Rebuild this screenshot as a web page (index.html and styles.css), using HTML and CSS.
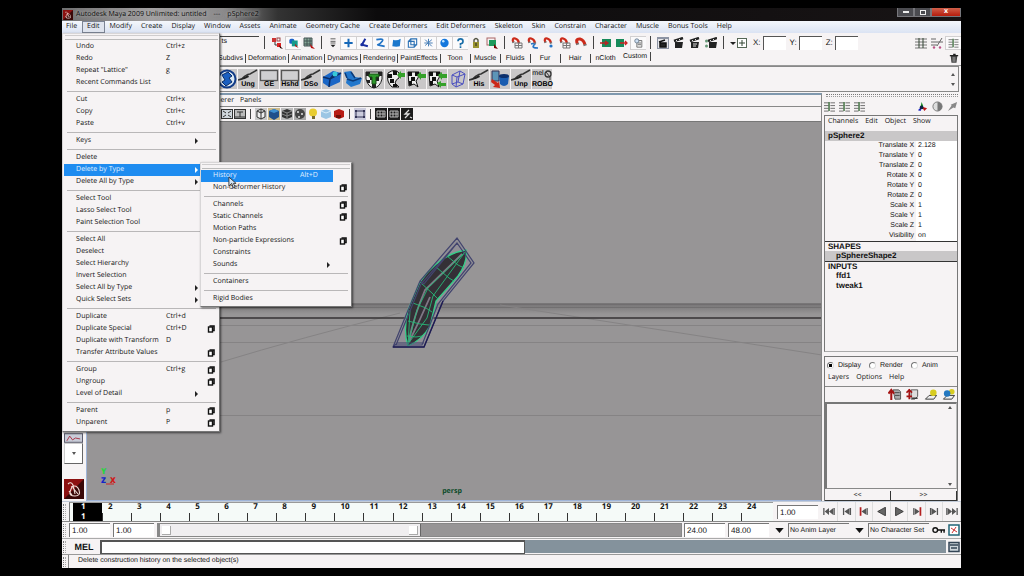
FILE: index.html
```html
<!DOCTYPE html>
<html lang="en">
<head>
<meta charset="utf-8">
<title>Autodesk Maya 2009 Unlimited: untitled --- pSphere2</title>
<link rel="stylesheet" href="styles.css">
</head>
<body>
<svg class="defs" aria-hidden="true">
  <symbol id="i-maya" viewBox="0 0 20 20"><rect width="20" height="20" fill="#8c1010"/><path d="M0 20L20 0V20Z" fill="#3a0808"/><path d="M4 5q3-3 5 1l2 9M7 8q6-3 8 3t-4 6-5-4 3-6M5 12l3 4M9 9l5 6" fill="none" stroke="#f0dcd6" stroke-width="1.1"/></symbol>
  <symbol id="i-hier" viewBox="0 0 12 12"><path d="M4 5v3h4" fill="none" stroke="#333"/><rect x="1" y="1" width="4" height="4" fill="#c33"/><rect x="6" y="1" width="3" height="3" fill="none" stroke="#944"/><rect x="6" y="6" width="4" height="4" fill="#d22"/><path d="M8 8l4 4-3-1z" fill="#200"/></symbol>
  <symbol id="i-obj" viewBox="0 0 12 12"><rect x="1" y="1" width="6" height="6" rx="2" fill="#1a62c8"/><rect x="4" y="3" width="7" height="7" fill="#159a8a"/><path d="M8 7l4 5-4-2z" fill="#b11"/></symbol>
  <symbol id="i-comp" viewBox="0 0 12 12"><path d="M1 1h8v8H1zM1 4h8M1 7h8M4 1v8M7 1v8" fill="#8a9" stroke="#455"/><path d="M7 7l5 5-4-1z" fill="#b11"/></symbol>
  <symbol id="i-list" viewBox="0 0 12 12"><path d="M3 1h6M3 4h6M3 6h6" stroke="#444"/><path d="M3 8h6l-3 3z" fill="#222"/></symbol>
  <symbol id="i-plus" viewBox="0 0 12 12"><path d="M6 1v10M1 6h10" stroke="#1668b8" stroke-width="2.4"/></symbol>
  <symbol id="i-joint" viewBox="0 0 12 12"><path d="M7 1L3 8l7 2" fill="none" stroke="#1a2fa0" stroke-width="2.4"/><circle cx="3" cy="8" r="2" fill="#1a2fa0"/></symbol>
  <symbol id="i-curve" viewBox="0 0 12 12"><path d="M1 2q10-2 7 2T3 8t8 2" fill="none" stroke="#2374c6" stroke-width="2"/></symbol>
  <symbol id="i-surf" viewBox="0 0 12 12"><path d="M2 2q4 2 9-1l-1 9q-4 1-9 0z" fill="#1c78cc"/></symbol>
  <symbol id="i-deform" viewBox="0 0 12 12"><path d="M4 1h7v7H4zM1 4h7v7H1zM1 4l3-3M8 11l3-3" fill="none" stroke="#2a70b4" stroke-width="1.3"/></symbol>
  <symbol id="i-dyn" viewBox="0 0 12 12"><path d="M6 1v9M2 2l8 8M10 2L2 9M1 6h10" stroke="#4a80b8" stroke-width="1.2"/></symbol>
  <symbol id="i-ball" viewBox="0 0 12 12"><circle cx="6" cy="6" r="5" fill="#1477dd"/><circle cx="4.500" cy="4" r="1.500" fill="#bfe4ff"/></symbol>
  <symbol id="i-help" viewBox="0 0 12 12"><path d="M3 4q0-3 3-3t3 3-3 3v2M6 10v2" fill="none" stroke="#1a6ea8" stroke-width="2"/></symbol>
  <symbol id="i-lock" viewBox="0 0 12 12"><path d="M4 5V3q2-3 4 0v2" fill="none" stroke="#554" stroke-width="1.4"/><rect x="3" y="5" width="6" height="6" fill="#9a9430"/><path d="M6 6v3" stroke="#222"/></symbol>
  <symbol id="i-hilite" viewBox="0 0 12 12"><rect x="1" y="1" width="8" height="7" fill="none" stroke="#a66"/><rect x="3" y="3" width="7" height="6" fill="#1d9a5c"/><path d="M8 7l4 5-4-1z" fill="#700"/></symbol>
  <symbol id="i-magnet" viewBox="0 0 12 12"><path d="M2.500 7Q0 1.500 5 2q4 1 5 6" fill="none" stroke="#cc2a1a" stroke-width="3"/><path d="M1 7.500l3-1M8.500 8.500l3-1" stroke="#777" stroke-width="1.500"/></symbol>
  <symbol id="i-snapgrid" viewBox="0 0 12 12"><path d="M4 6h7v5H4zM4 8.500h7M7.500 6v5" fill="none" stroke="#777"/><use href="#i-magnet" width="10" height="9"/></symbol>
  <symbol id="i-snapcurve" viewBox="0 0 12 12"><path d="M4 7q6-2 3 1t4 3" fill="none" stroke="#2374c6" stroke-width="1.600"/><use href="#i-magnet" width="10" height="9"/></symbol>
  <symbol id="i-snappt" viewBox="0 0 12 12"><circle cx="8" cy="9" r="1.600" fill="#2374c6"/><use href="#i-magnet" width="10" height="9"/></symbol>
  <symbol id="i-in" viewBox="0 0 12 12"><rect x="2" y="2" width="9" height="8" fill="#178a5a"/><path d="M0 6h8M5 4l3 2-3 2" stroke="#b22" fill="none" stroke-width="1.300"/></symbol>
  <symbol id="i-out" viewBox="0 0 12 12"><rect x="0" y="2" width="8" height="8" fill="#178a5a"/><path d="M4 6h7M9 4l2 2-2 2" stroke="#c22" fill="none" stroke-width="1.300"/></symbol>
  <symbol id="i-hist" viewBox="0 0 12 12"><path d="M4 3h6v8H4zM5 6h4M5 8h4" fill="#eee" stroke="#666"/><circle cx="4" cy="3.500" r="2.500" fill="#cfe0f4" stroke="#678"/></symbol>
  <symbol id="i-rview" viewBox="0 0 12 12"><rect x="0" y="0" width="12" height="12" fill="#8d94a4"/><rect x="1" y="2" width="10" height="9" fill="#e6e6ea"/><path d="M3 6h6v4H3zM2 5l6-2" stroke="#111" fill="#222" stroke-width="1.500"/></symbol>
  <symbol id="i-clap" viewBox="0 0 12 12"><path d="M2 5h8l-1 6H2z" fill="#222"/><path d="M1 4l9-3" stroke="#222" stroke-width="2.500"/><path d="M3 3l1 1M6 2l1 1" stroke="#ddd"/></symbol>
  <symbol id="i-clap2" viewBox="0 0 12 12"><use href="#i-clap"/><path d="M4 7h4M4 9h3" stroke="#ddd"/></symbol>
  <symbol id="i-clap3" viewBox="0 0 12 12"><circle cx="1.500" cy="4" r="1.500" fill="#697"/><circle cx="1.500" cy="9" r="1.500" fill="#697"/><use href="#i-clap" x="2"/></symbol>
  <symbol id="i-field" viewBox="0 0 18 12"><path d="M0 5h6L3 8z" fill="#222"/><rect x="7.500" y="1.500" width="9" height="9" fill="#fff" stroke="#565"/><path d="M12 3v6M9 6h6" stroke="#343"/></symbol>
  <symbol id="i-attr" viewBox="0 0 12 12"><path d="M0 2h12M0 5h12M0 8h12M0 11h12" stroke="#777"/><path d="M4 1v10M8 1v10" stroke="#343"/></symbol>
  <symbol id="i-attr2" viewBox="0 0 12 12"><path d="M0 2h5M0 5h12M0 8h6M6 9l5-8" stroke="#666"/><circle cx="3" cy="10.500" r="1.200" fill="#b58"/><circle cx="9" cy="10.500" r="1.200" fill="#b58"/></symbol>
  <symbol id="i-chan" viewBox="0 0 12 12"><path d="M0 2h5M0 5h5M0 8h5M0 11h5M7 2h5M7 5h5M7 8h5M7 11h5" stroke="#666"/><path d="M5.500 1v10" stroke="#363" stroke-width="1.500"/></symbol>
  <symbol id="i-trash" viewBox="0 0 12 12"><path d="M2 3h8l-1 8H3z" fill="#444"/><path d="M1 2.500h10M5 1h3" stroke="#222" stroke-width="1.500"/><path d="M5 4v6M7 4v6" stroke="#aaa"/></symbol>
  <symbol id="s-swirl" viewBox="0 0 20 20"><circle cx="10" cy="10" r="8.500" fill="#dbe8f4" stroke="#123c88" stroke-width="2"/><path d="M5 6l6-3 4 4-3 2 3 4-6 4-4-4 3-2z" fill="#1b5fc0" stroke="#0c2d66"/></symbol>
  <symbol id="s-brush" viewBox="0 0 20 20"><path d="M0 11q5-1 7-4 3-2 5-2l7-4" fill="none" stroke="#333" stroke-width="1.500"/><path d="M2 11q4-3 8-5l1 2q-5 3-9 3z" fill="#222"/></symbol>
  <symbol id="s-win" viewBox="0 0 20 20"><rect x="1.500" y="1.500" width="17" height="10" fill="#cfcfd1" stroke="#555" stroke-width="1.300"/></symbol>
  <symbol id="s-cube" viewBox="0 0 20 20"><path d="M1 8l10-6 8 2-1 9-11 5-6-4z" fill="#1a66c6"/><path d="M1 8l7 2 11-6M8 10l-1 8M8 10l4-5" fill="none" stroke="#0b2c66" stroke-width="1.500"/><circle cx="13" cy="5" r="2.500" fill="#35c8d8"/></symbol>
  <symbol id="s-box" viewBox="0 0 20 20"><path d="M1 3l7-1 4 6 7 1-2 6-9 3-5-4 1-5z" fill="#2277cc"/><path d="M4 10l6 2 8-3M8 3l4 6M4 9l-2-5" fill="none" stroke="#0b3a78" stroke-width="1.500"/></symbol>
  <symbol id="s-check" viewBox="0 0 20 20"><path d="M2 3h16v7q-2 8-8 9-6-1-8-9z" fill="#eee" stroke="#222"/><path d="M2 3h4v4H2zM14 3h4v4h-4zM6 7h3v4H6zM12 8h3v4h-3zM3 11h3v3H3zM8 15h4v4H8z" fill="#222"/></symbol>
  <symbol id="s-checkT" viewBox="0 0 20 20"><use href="#s-check"/><path d="M5 5h10v3h-3v7H8V8H5z" fill="#2e9a2c" stroke="#164d15"/></symbol>
  <symbol id="s-checkA" viewBox="0 0 20 20"><path d="M3 4q7-5 11 0v5q-3 1-4 5l4 4H7Q1 13 3 4z" fill="#eee" stroke="#111"/><path d="M3 5h4v4H3zM8 2h4v4H8zM5 10h4v4H5zM8 15h4v3H8z" fill="#111"/><path d="M12 6l4-4v2h4v4h-4v2z" fill="#35a12a"/></symbol>
  <symbol id="s-checkB" viewBox="0 0 20 20"><path d="M2 3h11l-1 6-2 3 2 6-4-3-5 2z" fill="#eee" stroke="#111"/><path d="M2 3h4v4H2zM9 3h4v4H9zM5 8h4v4H5zM3 12h3v4H3z" fill="#111"/><path d="M11 6l4-3v2h5v4h-5v2z" fill="#35a12a"/></symbol>
  <symbol id="s-checkC" viewBox="0 0 20 20"><use href="#s-checkB"/><path d="M10 14l4-2v2h5v3h-5v2z" fill="#35a12a"/></symbol>
  <symbol id="s-lattice" viewBox="0 0 20 20"><path d="M4 6l8-4 5 3-2 10-7 3-4-3zM4 6l5 2 8-3M9 8l-1 10M12 2l-2 11-6 2M10 13l5 2" fill="none" stroke="#4a4fc0"/></symbol>
  <symbol id="s-bin" viewBox="0 0 20 20"><path d="M2 2h7v10H2z" fill="#5c95b8" stroke="#335"/><path d="M9 7h10l-1 8q-4 4-8 0z" fill="#1a5cb0"/><ellipse cx="14" cy="7" rx="5" ry="2" fill="#0c2f6c"/><path d="M2 10l6 4 1-2 1 7-7-1 2-2-4-3z" fill="#cc2818"/></symbol>
  <symbol id="s-robo" viewBox="0 0 20 20"><circle cx="16" cy="5" r="3" fill="none" stroke="#333" stroke-width="1.300"/><path d="M14 3l4 5v3" stroke="#333" fill="none"/></symbol>
  <symbol id="p-view" viewBox="0 0 12 12"><rect x=".5" y="1.500" width="11" height="9" fill="#cfd6dc" stroke="#333"/><path d="M2 3l3 2M10 3L7 5M2 9l3-2M10 9L7 7" stroke="#333"/></symbol>
  <symbol id="p-gate" viewBox="0 0 12 12"><rect x=".5" y="1.500" width="11" height="9" fill="#bbb" stroke="#333"/><path d="M3 4h6M6 4v5M1 9h10" stroke="#333"/></symbol>
  <symbol id="p-wire" viewBox="0 0 12 12"><rect width="12" height="12" fill="#c8c8c8"/><path d="M2 3l4-2 4 2v6l-4 2-4-2zM2 3l4 2 4-2M6 1v10" fill="#eee" stroke="#333"/></symbol>
  <symbol id="p-shade" viewBox="0 0 12 12"><rect width="12" height="12" fill="#cbb98a"/><path d="M1 3l5-2 5 2v6l-5 3-5-3z" fill="#1f4f8a"/><path d="M1 3l5 2 5-2-5-2z" fill="#3d8fd0"/></symbol>
  <symbol id="p-tex" viewBox="0 0 12 12"><rect width="12" height="12" fill="#bbb"/><path d="M1 3l5-2 5 2v6l-5 2-5-2z" fill="#333"/><path d="M1 6l5 2 5-2M6 5v6M1 3l5 2 5-2" fill="none" stroke="#888"/></symbol>
  <symbol id="p-check" viewBox="0 0 12 12"><rect width="12" height="12" fill="#aaa"/><circle cx="6" cy="6" r="5" fill="#444"/><path d="M3 3h2v2H3zM7 5h2v2H7zM4 8h2v2H4z" fill="#bbb"/></symbol>
  <symbol id="p-bulb" viewBox="0 0 12 12"><circle cx="6" cy="4.500" r="4" fill="#e8cc30"/><path d="M5 8h3v3H5z" fill="#776a30"/></symbol>
  <symbol id="p-ice" viewBox="0 0 12 12"><path d="M1 3l5-2 5 2v6l-5 2-5-2z" fill="#9cc6e4"/><path d="M1 3l5 2 5-2" fill="none" stroke="#d8ecf8"/></symbol>
  <symbol id="p-red" viewBox="0 0 12 12"><path d="M1 3l5-2 5 2v6l-5 2-5-2z" fill="#b81c14"/><path d="M3 7h5v3H3z" fill="#701008"/></symbol>
  <symbol id="p-iso" viewBox="0 0 12 12"><rect width="12" height="12" fill="#ccd"/><path d="M2 3h8v6H2z" fill="none" stroke="#335"/><path d="M1 2h2v2H1zM9 2h2v2H9zM1 8h2v2H1zM9 8h2v2H9z" fill="#335"/></symbol>
  <symbol id="p-dark" viewBox="0 0 12 12"><rect width="12" height="12" fill="#1c1c1c"/><path d="M2 3h8v6H2zM2 6h8M5 3v6M8 3v6" fill="none" stroke="#b8b8b8"/></symbol>
  <symbol id="p-dark2" viewBox="0 0 12 12"><rect width="12" height="12" fill="#1c1c1c"/><path d="M8 2L4 6h4l-4 4M9 9l2 1" fill="none" stroke="#ddd" stroke-width="1.300"/></symbol>
  <symbol id="r-axis" viewBox="0 0 12 12"><path d="M5 1l2 5H4z" fill="#118a22"/><path d="M5 6l6 2-3 3z" fill="#c01818"/><path d="M5 6L1 10l3 1z" fill="#1520c0"/><circle cx="5" cy="7" r="2" fill="#124"/></symbol>
  <symbol id="r-half" viewBox="0 0 12 12"><circle cx="6" cy="6" r="5" fill="#ddd" stroke="#777"/><path d="M6 1a5 5 0 010 10z" fill="#777"/></symbol>
  <symbol id="r-arrow" viewBox="0 0 12 12"><path d="M1 11l4-6-1-1 7-3-2 7-2-1z" fill="#888"/></symbol>
  <symbol id="l-up" viewBox="0 0 14 14"><path d="M5 2h6l2 2v8H7z" fill="#aaa" stroke="#555"/><path d="M7 5h5M7 8h5" stroke="#444"/><path d="M3 13V3M0 6l3-4 3 4" stroke="#a51414" stroke-width="2.200" fill="none"/></symbol>
  <symbol id="l-down" viewBox="0 0 14 14"><path d="M5 2h7v7l-3 3H5z" fill="#ddd" stroke="#555"/><path d="M6 11h6" stroke="#333" stroke-width="1.500"/><path d="M3 1v11M0 5l3-3 3 3M0 9h6" stroke="#a51414" stroke-width="1.800" fill="none"/></symbol>
  <symbol id="l-new" viewBox="0 0 14 14"><path d="M1 12l4-4h8l-3 4z" fill="#eee" stroke="#333"/><circle cx="9.500" cy="5" r="3.500" fill="#d8cc20"/></symbol>
  <symbol id="l-newsel" viewBox="0 0 14 14"><path d="M1 12l4-4h8l-3 4z" fill="#eee" stroke="#333"/><circle cx="10" cy="4" r="3" fill="#d8cc20"/><circle cx="5" cy="6" r="3.500" fill="#2478c0"/></symbol>
  <symbol id="t-start" viewBox="0 0 14 10"><path d="M1 1v8M13 1v8" stroke="#555" stroke-width="1.500"/><path d="M7 1v8L2 5zM12 1v8L7 5z" fill="#555"/></symbol>
  <symbol id="t-back" viewBox="0 0 14 10"><path d="M3 1v8M11 1v8" stroke="#555" stroke-width="1.500"/><path d="M10 1v8L4 5z" fill="#555"/></symbol>
  <symbol id="t-keyb" viewBox="0 0 14 10"><path d="M3 0v10" stroke="#b42020" stroke-width="2"/><path d="M10 1v8L4 5z" fill="#555"/><path d="M11 1v8" stroke="#555"/></symbol>
  <symbol id="t-rev" viewBox="0 0 14 10"><path d="M11 0v10L2 5z" fill="#666" stroke="#333"/></symbol>
  <symbol id="t-menu" viewBox="0 0 10 6"><path d="M0 0h10L5 6z" fill="#111"/></symbol>
  <symbol id="t-key" viewBox="0 0 14 10"><circle cx="3.500" cy="5" r="2.500" fill="none" stroke="#111" stroke-width="1.500"/><path d="M6 5h8M10 5v3M13 5v3" stroke="#111" stroke-width="1.500" fill="none"/></symbol>
  <symbol id="t-auto" viewBox="0 0 12 12"><rect x="1" y="1" width="10" height="10" fill="#fff" stroke="#267" stroke-width="1.500"/><path d="M3 4l6 4M8 3L4 9" stroke="#c33"/></symbol>
  <symbol id="t-script" viewBox="0 0 12 12"><rect x="1" y="1.500" width="10" height="9" fill="#ccd4da" stroke="#345" stroke-width="1.500"/><path d="M2 4h8M3 7h6" stroke="#345" stroke-width="1.500"/></symbol>
  <symbol id="m-opt" viewBox="0 0 8 8"><path d="M2.500 1h4.500v4.500h-1.500" fill="none" stroke="#111" stroke-width="1.600"/><rect x="1.500" y="2" width="4" height="5" fill="#fff" stroke="#111" stroke-width="1.400"/></symbol>
</svg>

<main class="app">
  <header class="titlebar">
    <svg class="logo"><use href="#i-maya"/></svg>
    <h1 class="caption"><span>Autodesk Maya 2009 Unlimited: untitled</span><span>---</span><span>pSphere2</span></h1>
    <div class="winbtns"><button class="wb" aria-label="Minimize"><i class="g-min"></i></button><button class="wb" aria-label="Restore"><i class="g-max"></i></button><button class="wb close" aria-label="Close">x</button></div>
  </header>

  <nav class="menubar">
    <button>File</button><div class="menuhost"><button class="open">Edit</button>
      <div class="menu editmenu">
        <button>Undo<kbd>Ctrl+z</kbd></button>
        <button>Redo<kbd>Z</kbd></button>
        <button>Repeat "Lattice"<kbd>g</kbd></button>
        <button>Recent Commands List</button>
        <hr>
        <button>Cut<kbd>Ctrl+x</kbd></button>
        <button>Copy<kbd>Ctrl+c</kbd></button>
        <button>Paste<kbd>Ctrl+v</kbd></button>
        <hr>
        <button class="sub">Keys</button>
        <hr>
        <button>Delete</button>
        <div class="menuhost">
          <button class="sub on">Delete by Type</button>
          <div class="menu submenu">
            <button class="on">History<kbd>Alt+D</kbd></button>
            <button>Non-deformer History<svg><use href="#m-opt"/></svg></button>
            <hr>
            <button>Channels<svg><use href="#m-opt"/></svg></button>
            <button>Static Channels<svg><use href="#m-opt"/></svg></button>
            <button>Motion Paths</button>
            <button>Non-particle Expressions<svg><use href="#m-opt"/></svg></button>
            <button>Constraints</button>
            <button class="sub">Sounds</button>
            <hr>
            <button>Containers</button>
            <hr>
            <button>Rigid Bodies</button>
            <svg class="cursor" viewBox="0 0 10 14"><path d="M1 1v10l3-3 2 5 2-1-2-4h3z" fill="#cfe2f4" stroke="#333"/></svg>
          </div>
        </div>
        <button class="sub">Delete All by Type</button>
        <hr>
        <button>Select Tool</button>
        <button>Lasso Select Tool</button>
        <button>Paint Selection Tool</button>
        <hr>
        <button>Select All</button>
        <button>Deselect</button>
        <button>Select Hierarchy</button>
        <button>Invert Selection</button>
        <button class="sub">Select All by Type</button>
        <button class="sub">Quick Select Sets</button>
        <hr>
        <button>Duplicate<kbd>Ctrl+d</kbd></button>
        <button>Duplicate Special<kbd>Ctrl+D</kbd><svg><use href="#m-opt"/></svg></button>
        <button>Duplicate with Transform<kbd>D</kbd></button>
        <button>Transfer Attribute Values<svg><use href="#m-opt"/></svg></button>
        <hr>
        <button>Group<kbd>Ctrl+g</kbd><svg><use href="#m-opt"/></svg></button>
        <button>Ungroup<svg><use href="#m-opt"/></svg></button>
        <button class="sub">Level of Detail</button>
        <hr>
        <button>Parent<kbd>p</kbd><svg><use href="#m-opt"/></svg></button>
        <button>Unparent<kbd>P</kbd><svg><use href="#m-opt"/></svg></button>
      </div>
    </div><button>Modify</button><button>Create</button><button>Display</button><button>Window</button><button>Assets</button><button>Animate</button><button>Geometry Cache</button><button>Create Deformers</button><button>Edit Deformers</button><button>Skeleton</button><button>Skin</button><button>Constrain</button><button>Character</button><button>Muscle</button><button>Bonus Tools</button><button>Help</button>
  </nav>

  <section class="status">
    <div class="mask">ts</div>
    <div class="icons">
      <i class="grip"></i>
      <svg><use href="#i-hier"/></svg><svg class="lit"><use href="#i-obj"/></svg><svg><use href="#i-comp"/></svg>
      <i class="grip"></i>
      <svg class="slim"><use href="#i-list"/></svg><svg class="lit"><use href="#i-plus"/></svg><svg class="lit"><use href="#i-joint"/></svg><svg class="lit"><use href="#i-curve"/></svg><svg class="lit"><use href="#i-surf"/></svg><svg class="lit"><use href="#i-deform"/></svg><svg class="lit"><use href="#i-dyn"/></svg><svg class="lit"><use href="#i-ball"/></svg><svg class="lit"><use href="#i-help"/></svg><svg><use href="#i-lock"/></svg><svg><use href="#i-hilite"/></svg>
      <i class="grip"></i>
      <svg><use href="#i-snapgrid"/></svg><svg><use href="#i-snapcurve"/></svg><svg><use href="#i-snappt"/></svg><svg><use href="#i-snapgrid"/></svg><svg><use href="#i-magnet"/></svg>
      <i class="grip"></i>
      <svg><use href="#i-in"/></svg><svg><use href="#i-out"/></svg><svg class="lit"><use href="#i-hist"/></svg>
      <i class="grip"></i>
      <svg><use href="#i-rview"/></svg><svg><use href="#i-clap"/></svg><svg><use href="#i-clap2"/></svg><svg><use href="#i-clap3"/></svg>
      <i class="grip"></i>
      <svg class="wide"><use href="#i-field"/></svg>
    </div>
    <label class="coord">X:<input type="text"></label><label class="coord">Y:<input type="text"></label><label class="coord">Z:<input type="text"></label>
    <div class="icons end"><svg><use href="#i-attr"/></svg><svg><use href="#i-attr2"/></svg><svg class="lit"><use href="#i-chan"/></svg></div>
  </section>

  <section class="shelftabs">
    <button>Subdivs</button><button>Deformation</button><button>Animation</button><button>Dynamics</button><button>Rendering</button><button>PaintEffects</button><button>Toon</button><button>Muscle</button><button>Fluids</button><button>Fur</button><button>Hair</button><button class="last">nCloth</button><button class="cur">Custom</button>
    <svg class="trash"><use href="#i-trash"/></svg>
  </section>

  <section class="shelf">
    <div class="tile"><svg><use href="#s-swirl"/></svg></div>
    <div class="tile"><svg><use href="#s-brush"/></svg><b>Ung</b></div>
    <div class="tile"><svg><use href="#s-win"/></svg><b>GE</b></div>
    <div class="tile"><svg><use href="#s-win"/></svg><b>Hshd</b></div>
    <div class="tile"><svg><use href="#s-brush"/></svg><b>DSo</b></div>
    <div class="tile"><svg><use href="#s-cube"/></svg></div>
    <div class="tile"><svg><use href="#s-box"/></svg></div>
    <div class="tile"><svg><use href="#s-checkT"/></svg></div>
    <div class="tile"><svg><use href="#s-checkA"/></svg></div>
    <div class="tile"><svg><use href="#s-checkB"/></svg></div>
    <div class="tile"><svg><use href="#s-checkC"/></svg></div>
    <div class="tile"><svg><use href="#s-lattice"/></svg></div>
    <div class="tile"><svg><use href="#s-brush"/></svg><b>His</b></div>
    <div class="tile"><svg><use href="#s-bin"/></svg></div>
    <div class="tile"><svg><use href="#s-brush"/></svg><b>Unp</b></div>
    <div class="tile two"><svg><use href="#s-robo"/></svg><b>mel</b><b>ROBO</b></div>
    <div class="updown"><i class="up"></i><i class="down"></i></div>
  </section>

  <div class="work">
    <aside class="toolbox">
      <div class="layout"><svg viewBox="0 0 20 10"><rect x=".5" y=".5" width="19" height="9" fill="#c8ccd8" stroke="#556"/><path d="M3 8l3-5 3 4 3-2 5 1" fill="none" stroke="#a34"/></svg></div>
      <button class="more" aria-label="More"><i class="down"></i></button>
      <svg class="mayalogo"><use href="#i-maya"/></svg>
    </aside>
    <section class="panel">
      <div class="panelmenu"><button>Renderer</button><button>Panels</button></div>
      <div class="paneltools">
        <svg><use href="#p-view"/></svg><svg><use href="#p-gate"/></svg><i class="grip"></i><svg><use href="#p-wire"/></svg><svg><use href="#p-shade"/></svg><svg><use href="#p-tex"/></svg><svg><use href="#p-check"/></svg><svg><use href="#p-bulb"/></svg><svg><use href="#p-ice"/></svg><svg><use href="#p-red"/></svg><i class="grip"></i><svg><use href="#p-iso"/></svg><i class="grip"></i><svg><use href="#p-dark"/></svg><svg><use href="#p-dark"/></svg><svg><use href="#p-dark2"/></svg>
      </div>
      <div class="viewport">
        <svg class="scene" viewBox="86 122 736 378" preserveAspectRatio="xMidYMid slice">
          <defs><linearGradient id="hz" x1="0" y1="0" x2="0" y2="1"><stop offset="0" stop-color="#777576"/><stop offset=".35" stop-color="#7f7d7e"/><stop offset="1" stop-color="#979596"/></linearGradient></defs>
          <rect x="86" y="303" width="736" height="11" fill="url(#hz)"/>
          <path d="M86 304.500H822M86 307.500H822" stroke="#6d6b6c" stroke-width=".8"/>
          <path d="M86 325.500H822M86 342.500H822M86 415.500H822" stroke="#858384"/>
          <path d="M221 362Q300 338 400 313M500 305L822 355" stroke="#858384" fill="none"/>
          <path d="M86 318H822" stroke="#343233" stroke-width="1.700"/>
          <path d="M393 347L408 307 418 283 421 280 457 238 474 263 442 302 437 310 424 347z" fill="#8b8a96" opacity=".5"/>
          <path d="M408 346Q403 332 408 310L420 282Q440 254 466 250 468 262 458 276L436 301 430 326Q422 340 408 346z" fill="#343036"/>
          <path d="M409 340Q414 316 425 290L462 254M409 342Q420 320 430 297" fill="none" stroke="#807886" stroke-width="1.800"/>
          <path d="M408 346Q403 332 408 310L420 282Q440 254 466 250 468 262 458 276L436 301 430 326Q422 340 408 346z" fill="none" stroke="#35cf8a" stroke-width="1.300"/>
          <path d="M408 344L417 310 428 288 465 252M408 344L427 318 433 296 465 252M408 346L410 310M420 282L433 294 438 299M436 267L449 278 454 281M447 256L458 265 464 268M413 303L426 308 432 312M408 321L420 324 429 325M407 336L416 337 422 336" fill="none" stroke="#28b878" stroke-width=".9"/>
          <path d="M393 347L420 281 457 238 474 263 443 301 424 347zM396 345L421 284 457 243 471 263 438 304 422 345zM393 347L397 343H424M420 281L424 284 457 243" fill="none" stroke="#42446e" stroke-width="1.200"/>
          <path d="M443 301L424 347H393" fill="none" stroke="#1d1b52" stroke-width="1.400"/>
          <path d="M106 484h8" stroke="#c22"/>
        </svg>
        <span class="axes"><b class="ay">Y</b><b class="az">Z</b><b class="ax">X</b></span>
        <span class="camera">persp</span>
      </div>
    </section>

    <aside class="side">
      <div class="dots"></div>
      <div class="sidetools"><svg><use href="#i-chan"/></svg><svg><use href="#i-chan"/></svg><svg class="lit"><use href="#i-chan"/></svg><svg class="push"><use href="#r-axis"/></svg><svg><use href="#r-half"/></svg><svg><use href="#r-arrow"/></svg></div>
      <section class="channels">
        <div class="submenubar"><button>Channels</button><button>Edit</button><button>Object</button><button>Show</button></div>
        <h2 class="node">pSphere2</h2>
        <table>
          <tr><th scope="row">Translate X</th><td>2.128</td></tr>
          <tr><th scope="row">Translate Y</th><td>0</td></tr>
          <tr><th scope="row">Translate Z</th><td>0</td></tr>
          <tr><th scope="row">Rotate X</th><td>0</td></tr>
          <tr><th scope="row">Rotate Y</th><td>0</td></tr>
          <tr><th scope="row">Rotate Z</th><td>0</td></tr>
          <tr><th scope="row">Scale X</th><td>1</td></tr>
          <tr><th scope="row">Scale Y</th><td>1</td></tr>
          <tr><th scope="row">Scale Z</th><td>1</td></tr>
          <tr><th scope="row">Visibility</th><td>on</td></tr>
        </table>
        <h3>SHAPES</h3>
        <p class="shape">pSphereShape2</p>
        <h3>INPUTS</h3>
        <p>ffd1</p>
        <p>tweak1</p>
      </section>
      <section class="layers">
        <div class="radios"><label><input type="radio" name="layer" checked>Display</label><label><input type="radio" name="layer">Render</label><label><input type="radio" name="layer">Anim</label></div>
        <div class="submenubar"><button>Layers</button><button>Options</button><button>Help</button></div>
        <div class="layertools"><svg><use href="#l-up"/></svg><svg><use href="#l-down"/></svg><svg><use href="#l-new"/></svg><svg><use href="#l-newsel"/></svg></div>
        <div class="layerlist"><div class="updown"><i class="up"></i><i class="down"></i></div></div>
        <div class="pager"><button>&lt;&lt;</button><button>&gt;&gt;</button></div>
      </section>
    </aside>
  </div>

  <section class="timeline">
    <i class="vgrip"></i>
    <ol class="frames"><li class="now"><span>1</span><span>1</span></li><li>2</li><li>3</li><li>4</li><li>5</li><li>6</li><li>7</li><li>8</li><li>9</li><li>10</li><li>11</li><li>12</li><li>13</li><li>14</li><li>15</li><li>16</li><li>17</li><li>18</li><li>19</li><li>20</li><li>21</li><li>22</li><li>23</li><li>24</li></ol>
    <input class="num" type="text" value="1.00" aria-label="Current frame">
    <div class="play">
      <button aria-label="Go to start"><svg><use href="#t-start"/></svg></button><button aria-label="Step back"><svg><use href="#t-back"/></svg></button><button aria-label="Previous key"><svg><use href="#t-keyb"/></svg></button><button aria-label="Play backwards"><svg><use href="#t-rev"/></svg></button><button class="flip" aria-label="Play forwards"><svg><use href="#t-rev"/></svg></button><button class="flip" aria-label="Next key"><svg><use href="#t-keyb"/></svg></button><button class="flip" aria-label="Step forward"><svg><use href="#t-back"/></svg></button><button class="flip" aria-label="Go to end"><svg><use href="#t-start"/></svg></button>
    </div>
  </section>

  <section class="range">
    <i class="vgrip"></i>
    <input class="num" type="text" value="1.00" aria-label="Animation start"><input class="num" type="text" value="1.00" aria-label="Range start">
    <div class="track"><div class="thumb"><i></i><i></i></div></div>
    <input class="num" type="text" value="24.00" aria-label="Range end"><input class="num" type="text" value="48.00" aria-label="Animation end">
    <svg class="arrow"><use href="#t-menu"/></svg><select aria-label="Animation layer"><option>No Anim Layer</option></select>
    <svg class="arrow"><use href="#t-menu"/></svg><select aria-label="Character set"><option>No Character Set</option></select>
    <svg class="key"><use href="#t-key"/></svg><svg class="sq"><use href="#t-auto"/></svg>
  </section>

  <section class="command">
    <i class="vgrip"></i>
    <label for="mel">MEL</label><input id="mel" type="text"><output></output><svg class="sq"><use href="#t-script"/></svg>
  </section>

  <footer class="helpline"><i class="vgrip"></i><p>Delete construction history on the selected object(s)</p></footer>
</main>
</body>
</html>
```
FILE: styles.css
```css
* { box-sizing: border-box; text-rendering: geometricPrecision; }

body {
  margin: 0;
  padding: 8px 63px 8px 62px;
  height: 100vh;
  background: #000;
  color: #111;
  font: 7px/10px "Open Sans", "Noto Sans", sans-serif;
}

button, input, select { font: inherit; color: inherit; margin: 0; border: 0; padding: 0; background: none; border-radius: 0; }
h1, h2, h3, p, ol { margin: 0; padding: 0; font: inherit; }
svg { display: block; flex: none; }
.defs { position: absolute; width: 0; height: 0; }

.app { display: flex; flex-direction: column; height: 100%; background: #f6f3f4; }
.grip { width: 1px; height: 13px; margin: 0 4px; background: #444; flex: none; }
.up, .down { display: block; border: 2px solid transparent; }
.up { border-top: 0; border-bottom: 3px solid #555; }
.down { border-bottom: 0; border-top: 3px solid #555; }

/* Title bar */
.titlebar { display: flex; align-items: center; height: 13px; background: linear-gradient(90deg, #6f6f70 0, #a3a1a2 10%, #8b8a8b 18%, #333 24%, #0c0b0c 35%, #181415 100%); }
.logo { width: 10px; height: 10px; margin: 0 3px 0 1px; }
.caption { display: flex; gap: 7px; flex: 1; color: #0c0c0c; }
.caption span { text-shadow: 0 0 3px #b5b5b5, 0 0 5px #aaa; }
.winbtns { display: flex; align-self: flex-start; height: 9px; }
.wb { width: 17px; border: 1px solid #77777c; border-top: 0; background: #4b4b50; display: flex; align-items: center; justify-content: center; color: #fff; line-height: 6px; }
.close { width: 30px; background: linear-gradient(#d0604a, #b51c0c); font-weight: 700; }
.g-min { width: 6px; height: 2px; background: #eee; }
.g-max { width: 6px; height: 5px; border: 1px solid #eee; }

/* Menu bar */
.menubar { display: flex; gap: 1px; height: 12px; background: linear-gradient(#f4f7fc, #dbe3f3); position: relative; z-index: 5; }
.menubar > button, .menuhost > .open { padding: 0 4px; height: 12px; line-height: 12px; }
.menuhost { position: relative; }
.menuhost > .open { border: 1px solid #7c8494; line-height: 10px; background: #dfe4ee; }

/* Pop-up menus */
.menu { position: absolute; background: #f6f3f4; border: 1px solid #d8d6d7; border-right-color: #777; border-bottom-color: #777; box-shadow: 1px 1px 2px rgba(0,0,0,.6); }
.menu::before { content: ""; display: block; height: 3px; margin: 1px; border-top: 1px solid #cfcdce; border-bottom: 1px solid #bbb; }
.menu button { position: relative; display: block; width: 100%; height: 12px; line-height: 12px; padding: 0 0 0 12px; text-align: left; white-space: nowrap; }
.menu hr { margin: 2px 3px; border: 0; height: 1px; background: #b9b7b8; }
.menu kbd { position: absolute; font: inherit; }
.menu svg { position: absolute; right: 4px; top: 2px; width: 8px; height: 8px; }
.menu .sub::after { content: ""; position: absolute; right: 21px; top: 3px; border: 3px solid transparent; border-left: 3px solid #222; border-right: 0; }
.menu .on { color: #e4f2ff; background: #1e8cf0; }
.menu .on::after { border-left-color: #fff; }
.editmenu { left: -20px; top: 12px; width: 158px; padding: 0 0 2px 1px; }
.editmenu kbd { left: 102px; }
.editmenu .menuhost > .on { width: 136px; }
.editmenu .menuhost > .on::after { right: 2px; }
.submenu { left: 136px; top: -2px; width: 152px; z-index: 2; padding-bottom: 1px; }
.submenu > .on { width: 132px; }
.submenu kbd { left: 99px; }
.submenu .cursor { left: 27px; right: auto; top: 13px; width: 9px; height: 13px; }

/* Status line */
.status { display: flex; align-items: center; height: 19px; font-family: "Liberation Sans", sans-serif; }
.mask { width: 197px; height: 13px; padding-right: 32px; border-top: 1px solid #444; text-align: right; }
.icons { display: flex; align-items: center; margin-left: 1px; }
.icons svg { width: 16px; height: 14px; padding: 1px 2px; }
.icons .slim { width: 14px; }
.icons .wide { width: 22px; margin-right: 3px; }
.icons .lit { border: 1px solid #d2d0d1; border-right: 0; background: #fbfafb; }
.coord { display: flex; align-items: center; gap: 2px; margin-right: 4px; font-size: 8px; }
.coord input { width: 23px; height: 14px; border: 1px solid #555; border-right: 0; border-bottom: 0; background: #fff; }
.end { margin: 0 0 0 auto; }

/* Shelf */
.shelftabs { display: flex; align-items: center; height: 14px; padding-left: 154px; font: 7px/9px "Liberation Sans", sans-serif; border-bottom: 1px solid #999; }
.shelftabs button { min-width: 30px; padding: 0 2px; border-right: 1px solid #444; }
.shelftabs .last { border-right: 0; }
.shelftabs .cur { align-self: flex-start; }
.trash { width: 10px; height: 11px; margin-left: auto; margin-right: 2px; }
.shelf { display: flex; align-items: center; gap: 1px; height: 26px; margin-right: 2px; padding: 0 3px 0 155px; border: 1px solid #888; border-width: 1px 1px 1px 0; }
.tile { position: relative; width: 20px; height: 20px; background: #c9c7c8; flex: none; }
.tile svg { width: 20px; height: 20px; }
.tile b { position: absolute; left: 0; right: 0; bottom: 0; text-align: center; font: 700 7px/8px "Liberation Sans", sans-serif; color: #000; }
.two b:first-of-type { top: 1px; right: 8px; font-weight: 400; }
.updown { display: flex; flex-direction: column; justify-content: space-around; margin-left: auto; height: 20px; }

/* Work area */
.work { display: flex; flex: 1; min-height: 0; margin-top: 1px; gap: 2px; }
.toolbox { display: flex; flex-direction: column; justify-content: flex-end; width: 22px; padding: 0 1px 2px 2px; }
.layout svg { width: 19px; height: 10px; }
.more { display: flex; align-items: center; justify-content: center; width: 19px; height: 21px; border: 1px solid #ccc; border-right-color: #666; border-bottom-color: #666; background: #fff; }
.mayalogo { width: 20px; height: 20px; margin-top: 15px; }
.panel { display: flex; flex-direction: column; flex: 1; min-width: 0; border-left: 1px solid #9fb4d8; border-right: 1px solid #888; border-top: 2px solid #7f98ae; }
.panelmenu { display: flex; gap: 6px; height: 12px; padding-left: 115px; border-bottom: 1px solid #888; }
.panelmenu button { width: 32px; text-align: right; }
.panelmenu button + button { width: auto; }
.paneltools { display: flex; align-items: center; gap: 1px; height: 14px; padding-left: 134px; }
.paneltools svg { width: 12px; height: 12px; }
.paneltools .grip { margin: 0 3px; height: 10px; }
.viewport { position: relative; flex: 1; min-height: 0; background: #979596; border-top: 1px solid #777; border-bottom: 1px solid #9fb4d8; }
.scene { width: 100%; height: 100%; }
.camera { position: absolute; left: 0; right: 4px; bottom: 3px; text-align: center; color: #0a4a28; font-weight: 700; }
.axes { position: absolute; left: 14px; bottom: 15px; display: grid; grid-template-columns: 9px 8px; font-size: 8px; line-height: 9px; font-weight: 700; }
.ay { color: #22d83c; grid-column: 1 / 3; }
.az { color: #1424c8; }
.ax { color: #d01818; }

/* Channel box and layers */
.side { display: flex; flex-direction: column; width: 137px; padding-right: 3px; }
.dots { height: 3px; margin: 1px 0 0 2px; border-top: 1px dotted #777; border-bottom: 1px dotted #999; }
.sidetools { display: flex; align-items: center; height: 18px; gap: 4px; }
.sidetools svg { width: 11px; height: 11px; }
.sidetools .push { margin-left: auto; }
.channels { flex: 1; border: 1px solid #777; border-bottom-color: #aaa; font: 8px/10px "Liberation Sans", sans-serif; min-height: 0; }
.submenubar { display: flex; gap: 7px; height: 14px; padding: 0 0 3px 3px; font: 7px/10px "Open Sans", "Noto Sans", sans-serif; }
.node { margin-top: 1px; padding-left: 3px; font-weight: 700; background: #c9c7c8; }
.channels h2, .channels h3, .channels p { font-size: 8px; }
.channels table { width: 100%; border-collapse: collapse; border-bottom: 1px solid #333; }
.channels th { width: 69%; padding: 0 2px 0 0; text-align: right; font: 7px/10px "Liberation Sans", sans-serif; }
.channels td { padding: 0 0 0 2px; background: #fff; font-size: 7px; }
.channels h3 { padding-left: 3px; font-weight: 700; line-height: 9px; }
.channels p { padding-left: 11px; font-weight: 700; }
.channels .shape { background: #c9c7c8; border-bottom: 1px solid #333; }
.layers { margin-top: 4px; border: 1px solid #777; border-bottom: 0; }
.radios { display: flex; gap: 8px; height: 15px; align-items: center; padding: 2px 0 0 2px; font: 7px/10px "Liberation Sans", sans-serif; }
.radios label { display: flex; align-items: center; gap: 4px; }
.radios input { appearance: none; width: 7px; height: 7px; border: 1px solid #777; border-right-color: #ddd; border-bottom-color: #ddd; border-radius: 50%; background: #fff; }
.radios input:checked { background: radial-gradient(#000 40%, #fff 50%); }
.layertools { display: flex; justify-content: flex-end; gap: 4px; height: 16px; align-items: center; padding-right: 1px; border-top: 1px solid #888; }
.layertools svg { width: 14px; height: 13px; }
.layerlist { display: flex; height: 87px; padding: 2px 4px; border: 2px solid #777; border-right: 1px solid #bbb; border-bottom: 1px solid #888; }
.layerlist .updown { height: auto; justify-content: space-between; }
.pager { display: flex; height: 10px; margin-top: 2px; font-weight: 700; color: #555; }
.pager button { flex: 1; line-height: 8px; border-right: 1px solid #333; border-bottom: 1px solid #333; }

/* Time slider */
.vgrip { width: 3px; align-self: stretch; margin: 2px 2px 1px 1px; border-left: 1px dotted #777; border-right: 1px dotted #aaa; flex: none; }
.timeline { display: flex; height: 20px; border-top: 1px solid #c2cbd8; }
.frames { display: flex; flex: 1; margin: 0 4px 0 1px; padding: 0 3px; list-style: none; border-left: 1px solid #777; border-top: 1px solid #999; background: #f5faf8; font-size: 8px; font-weight: 700; line-height: 8px; }
.frames li { flex: 1 1 0; display: flex; flex-direction: column; justify-content: space-between; text-indent: 6px; color: #111; }
.frames li::after { content: ""; width: 1px; height: 8px; background: #333; }
.frames .now { background: #000; color: #fff; text-indent: 8px; }
.frames .now::after { content: none; }
.num { width: 41px; height: 14px; margin-right: 3px; padding: 0 2px; border: 1px solid #777; border-right: 0; border-bottom: 0; background: #fff; font: 8px/10px "Liberation Sans", sans-serif; flex: none; }
.timeline .num { margin-top: 3px; }
.play { display: flex; }
.play button { width: 17px; margin-right: 1px; display: flex; align-items: center; justify-content: center; border-right: 1px solid #ddd; }
.play button:nth-child(2n) { margin-right: 0; }
.play svg { width: 12px; height: 9px; }
.flip svg { transform: scaleX(-1); }

/* Range slider */
.range { display: flex; align-items: center; height: 17px; padding-right: 1px; border-top: 1px solid #888; }
.range .vgrip { margin-right: 3px; }
.track { flex: 1; height: 14px; margin-right: 2px; border: 1px solid #888; border-left-width: 3px; background: #979596; }
.thumb { display: flex; justify-content: space-between; align-items: center; width: 50%; height: 100%; background: #f0eef0; border-right: 1px solid #666; }
.thumb i { width: 9px; height: 9px; margin: 0 2px; border-right: 1px solid #aaa; border-bottom: 1px solid #aaa; background: #fff; }
.arrow { width: 9px; height: 5px; margin: 0 4px 0 3px; }
.range select { appearance: none; width: 61px; height: 14px; margin-right: 3px; padding: 0 1px; border: 1px solid #777; border-right: 0; border-bottom: 0; font: 7px/10px "Liberation Sans", sans-serif; }
.key { width: 13px; height: 10px; margin: 0 3px 0 auto; }
.sq { width: 12px; height: 12px; }

/* Command line and help line */
.command { display: flex; align-items: center; height: 16px; padding-right: 1px; border-top: 1px solid #aaa; }
.command label { width: 32px; text-align: center; font: 700 9px/10px "Liberation Sans", sans-serif; }
.command input { flex: 1; height: 14px; border: 1px solid #555; border-top-width: 2px; border-left-width: 2px; background: #fff; }
.command output { flex: 1; height: 13px; margin-right: 2px; background: #84929c; }
.helpline { display: flex; height: 14px; border-top: 1px solid #999; }
.helpline p { flex: 1; padding: 1px 0 0 9px; border-left: 1px solid #888; font-family: "Liberation Sans", sans-serif; }
```
